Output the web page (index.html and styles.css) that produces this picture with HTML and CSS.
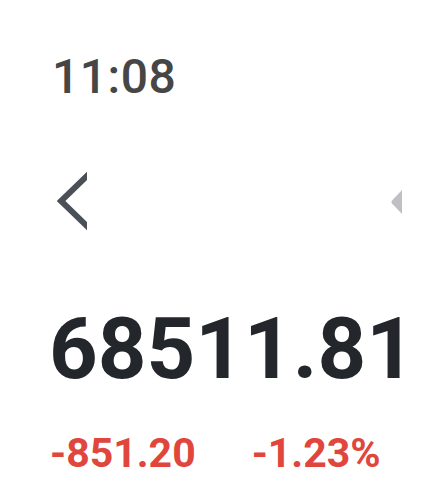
FILE: index.html
```html
<!DOCTYPE html>
<html lang="en">
	<head>
		<meta charset="utf-8" />
		<title>Quote</title>
		<link rel="stylesheet" href="styles.css">
	</head>
	<body>
		<div class="screen">
			<div class="clock">11:08</div>
			<div class="navRow">
				<svg class="navBack" width="30" height="60" viewBox="0 0 30 60">
					<polyline points="33,2 4,30 33,58" fill="none" stroke="#4b5058" stroke-width="6" stroke-linejoin="miter" />
				</svg>
				<svg class="navMore" width="14" height="28" viewBox="0 0 14 28">
					<path d="M13,2 L13,26 L3,15.5 Q1.8,14 3,12.5 Z" fill="#bec0c3" />
				</svg>
			</div>
			<div class="price">68511.81</div>
			<div class="change">
				<span class="changeAbs">-851.20</span>
				<span class="changePct">-1.23%</span>
			</div>
		</div>
	</body>
</html>
```
FILE: styles.css
```css
body {
	margin: 0;
	background-color: #FFFFFF;
	font-family: Roboto, "Liberation Sans", sans-serif;
}
.screen {
	padding: 53px 35px 0 48px;
}
.clock {
	font-size: 48px;
	font-weight: 500;
	line-height: 1;
	letter-spacing: 0.5px;
	color: #464646;
	padding-left: 4px;
}
.navRow {
	display: flex;
	justify-content: space-between;
	align-items: center;
	margin-top: 70px;
	padding-left: 9px;
	height: 60px;
}
.navBack {
	display: block;
}
.navMore {
	display: block;
	margin-top: 2px;
}
.price {
	margin-top: 76px;
	font-size: 85px;
	font-weight: 700;
	line-height: 1;
	color: #23262b;
	padding-left: 1px;
}
.change {
	display: flex;
	gap: 56px;
	margin-top: 41px;
	font-size: 41px;
	font-weight: 700;
	line-height: 1;
	color: #e0463b;
	padding-left: 2px;
}
```
